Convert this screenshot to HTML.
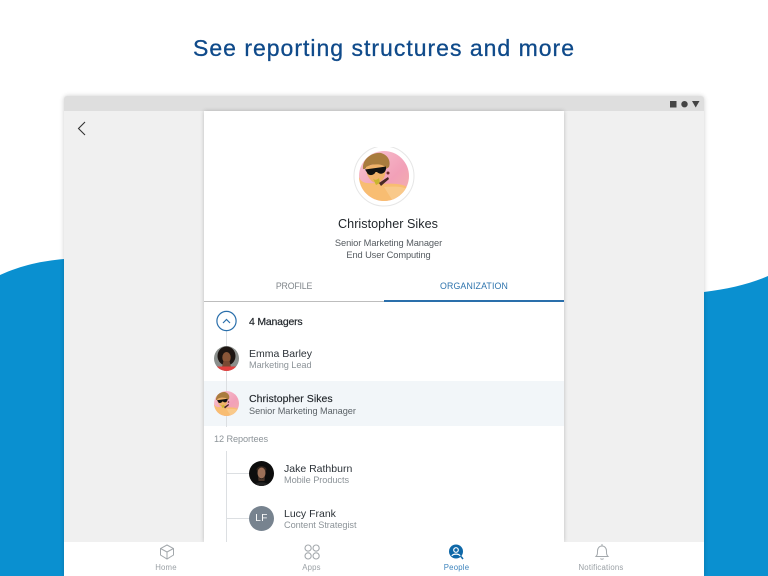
<!DOCTYPE html>
<html><head><meta charset="utf-8"><style>
html,body{margin:0;padding:0}
body{width:768px;height:576px;position:relative;overflow:hidden;background:#fff;font-family:"Liberation Sans",sans-serif}
.t{position:absolute;white-space:nowrap;line-height:14px}
.n{font-size:10.5px;letter-spacing:0;color:#2c3238}
.s{font-size:9.2px;letter-spacing:-.06px;color:#8d9499}
.nav{font-size:7.8px;letter-spacing:.2px;color:#9aa0a5;transform:translateX(-50%)}
.c{transform:translateX(-50%)}
</style></head><body>
<svg style="position:absolute;left:0;top:0" width="768" height="576"><path d="M0 275C22 265 42 261 64 259L704 292C728 289 750 284 768 276V576H0Z" fill="#0a90d0"/></svg>
<div class="t" style="left:193px;top:34px;line-height:28px;font-size:23px;font-weight:400;letter-spacing:1px;color:#0f4a8a;-webkit-text-stroke:.3px #0f4a8a">See reporting structures and more</div>

<div style="position:absolute;left:64px;top:96px;width:640px;height:480px;background:#f0f0f0;box-shadow:0 0 5px rgba(0,0,0,.2);border-radius:3px 3px 0 0"></div>
<div style="position:absolute;left:64px;top:96px;width:640px;height:15px;background:#dedede;border-radius:3px 3px 0 0"></div>
<svg style="position:absolute;left:668px;top:98px" width="34" height="12"><rect x="2" y="3" width="6.5" height="6.5" fill="#444"/><circle cx="16.5" cy="6.2" r="3.2" fill="#444"/><path d="M24 3H31.5L27.7 9.5Z" fill="#444"/></svg>
<svg style="position:absolute;left:74px;top:119px" width="16" height="18"><path d="M11 3L4.500 9.500L11 16" fill="none" stroke="#333" stroke-width="1.100"/></svg>

<div style="position:absolute;left:204px;top:111px;width:360px;height:431px;background:#fff;box-shadow:0 0 4px rgba(0,0,0,.22)"></div>

<!-- big avatar -->
<svg style="position:absolute;left:350px;top:147px" width="68" height="64" viewBox="0 0 68 64">
<defs><linearGradient id="g" x1="0" y1="0" x2="1" y2="1"><stop offset="0" stop-color="#f7c6d2"/><stop offset=".6" stop-color="#f2a0b8"/><stop offset="1" stop-color="#f4b3a8"/></linearGradient>
<clipPath id="c1"><circle cx="34" cy="29" r="25"/></clipPath>
<g id="chris"><rect x="8" y="3" width="52" height="52" fill="url(#g)"/>
<path d="M9 30C12 38 20 36 27 36C38 38 50 34 60 42V56H9Z" fill="#f8bd72"/>
<path d="M34 40C42 40 52 38 60 44V56H44Z" fill="#f9c98a"/>
<path d="M13 22C12 12 22 5 31 6C38 8 41 14 39 20L36 22C28 16 20 16 15 22Z" fill="#a97c3e"/>
<path d="M16 20C22 17 30 16 36 20L35 28C33 35 27 37 23 35C19 32 16 28 16 20Z" fill="#efb169"/>
<path d="M15 22.500L36 19.500L36 22C35 27 30 28 27 25L25.500 25C24 29 18 29 17 25.500Z" fill="#111"/>
<path d="M23 31.500C25 33.500 27 33 29 31L30 36L26 38Z" fill="#c9b52f"/>
<path d="M29 36L38 30L39 32L31 39Z" fill="#4a2a24"/>
<circle cx="38" cy="26" r="1.500" fill="#6e2a2a"/></g></defs>
<circle cx="34" cy="29" r="30" fill="#fff" stroke="#e6e6e6" stroke-width="1"/>
<g clip-path="url(#c1)"><use href="#chris"/></g></svg>

<div class="t c" style="left:388px;top:216px;font-size:12.6px;line-height:16px;letter-spacing:.03px;color:#23282d">Christopher Sikes</div>
<div class="t c" style="left:388.500px;top:236px;font-size:9.3px;letter-spacing:-.1px;color:#555b60">Senior Marketing Manager</div>
<div class="t c" style="left:388.500px;top:248px;font-size:9.3px;letter-spacing:-.12px;color:#555b60">End User Computing</div>

<div class="t c" style="left:294px;top:279px;font-size:8.8px;letter-spacing:-.2px;color:#80868b">PROFILE</div>
<div class="t c" style="left:474px;top:279px;font-size:8.8px;letter-spacing:.15px;color:#2e74ad">ORGANIZATION</div>
<div style="position:absolute;left:204px;top:301px;width:180px;height:1px;background:#bdbdbd"></div>
<div style="position:absolute;left:384px;top:300px;width:180px;height:2px;background:#2a6fab"></div>

<div style="position:absolute;left:204px;top:381px;width:360px;height:45px;background:#f2f6f9"></div>
<div style="position:absolute;left:226px;top:330px;width:1px;height:97px;background:#dcdfe2"></div>
<div style="position:absolute;left:226px;top:451px;width:1px;height:91px;background:#dcdfe2"></div>
<div style="position:absolute;left:226px;top:473px;width:24px;height:1px;background:#dcdfe2"></div>
<div style="position:absolute;left:226px;top:518px;width:24px;height:1px;background:#dcdfe2"></div>

<svg style="position:absolute;left:215px;top:309px" width="24" height="24"><circle cx="11.500" cy="12" r="9.600" fill="#fff" stroke="#2a6fab" stroke-width="1.200"/><path d="M8 14L11.500 10.500L15 14" fill="none" stroke="#2a6fab" stroke-width="1.200"/></svg>
<div class="t" style="left:249px;top:315px;font-size:10.5px;letter-spacing:-.2px;color:#23282d;-webkit-text-stroke:.2px #23282d">4 Managers</div>

<!-- Emma -->
<svg style="position:absolute;left:214px;top:346px" width="25" height="25" viewBox="0 0 25 25"><defs><clipPath id="c2"><circle cx="12.500" cy="12.500" r="12.500"/></clipPath></defs><g clip-path="url(#c2)"><rect width="25" height="25" fill="#8b8f8c"/><ellipse cx="12.500" cy="10" rx="9" ry="9.500" fill="#1d1512"/><ellipse cx="12.500" cy="11.500" rx="4.200" ry="5.500" fill="#8a5638"/><path d="M9.500 15H15.500L17 21H8Z" fill="#7a4a33"/><rect y="20.500" width="25" height="4.500" fill="#e2403f"/></g></svg>
<div class="t n" style="left:249px;top:347px">Emma Barley</div>
<div class="t s" style="left:249px;top:358px">Marketing Lead</div>

<!-- Christopher small -->
<svg style="position:absolute;left:214px;top:391px" width="25" height="25" viewBox="9 4 50 50"><defs><clipPath id="c3"><circle cx="34" cy="29" r="25"/></clipPath></defs><g clip-path="url(#c3)"><use href="#chris"/></g></svg>
<div class="t n" style="left:249px;top:392px;letter-spacing:.05px;color:#1f2429;-webkit-text-stroke:.15px #1f2429">Christopher Sikes</div>
<div class="t s" style="left:249px;top:403.500px;color:#5c6368">Senior Marketing Manager</div>

<div class="t s" style="left:214px;top:432px;letter-spacing:-.1px">12 Reportees</div>

<!-- Jake -->
<svg style="position:absolute;left:249px;top:461px" width="25" height="25" viewBox="0 0 25 25"><defs><clipPath id="c4"><circle cx="12.500" cy="12.500" r="12.500"/></clipPath></defs><g clip-path="url(#c4)"><rect width="25" height="25" fill="#0d0d0d"/><path d="M7.500 9C7.500 4 17.500 4 17.500 9L16 11H9Z" fill="#33241c"/><ellipse cx="12.500" cy="12" rx="4" ry="5.500" fill="#9c7058"/><path d="M9 15C11 19 14 19 16 15L15.500 20H9.500Z" fill="#4a352a"/><path d="M5 25C6 20 19 20 20 25Z" fill="#222"/></g></svg>
<div class="t n" style="left:284px;top:462px">Jake Rathburn</div>
<div class="t s" style="left:284px;top:473px">Mobile Products</div>

<!-- Lucy -->
<div style="position:absolute;left:249px;top:506px;width:25px;height:25px;border-radius:50%;background:#77838f;color:#fff;font-size:10px;line-height:26px;text-align:center;letter-spacing:.4px">LF</div>
<div class="t n" style="left:284px;top:507px">Lucy Frank</div>
<div class="t s" style="left:284px;top:518px">Content Strategist</div>

<!-- bottom nav -->
<div style="position:absolute;left:64px;top:542px;width:640px;height:34px;background:#fff"></div>
<svg style="position:absolute;left:158px;top:543px" width="18" height="18"><g fill="none" stroke="#a3a8ac" stroke-width="1"><path d="M9 2L15.500 5.500V12L9 16L2.500 12V5.500Z"/><path d="M2.500 5.500L9 9L15.500 5.500M9 9V16"/></g></svg>
<svg style="position:absolute;left:303px;top:543px" width="18" height="18"><g fill="none" stroke="#a3a8ac" stroke-width="1.100"><rect x="2" y="2" width="6.200" height="6.200" rx="3.100"/><rect x="10" y="2" width="6.200" height="6.200" rx="3.100"/><rect x="2" y="9.800" width="6.200" height="6.200" rx="3.100"/><rect x="10" y="9.800" width="6.200" height="6.200" rx="3.100"/></g></svg>
<svg style="position:absolute;left:447px;top:543px" width="18" height="18"><circle cx="9" cy="8.500" r="7" fill="#0f68a8"/><path d="M14 13.500L16 16" stroke="#0f68a8" stroke-width="1.500"/><circle cx="9" cy="7" r="2.300" fill="none" stroke="#fff" stroke-width="1.200"/><path d="M5 13C5.500 10.500 12.500 10.500 13 13" fill="none" stroke="#fff" stroke-width="1.200"/></svg>
<svg style="position:absolute;left:593px;top:543px" width="18" height="18"><g fill="none" stroke="#a3a8ac" stroke-width="1"><path d="M3 13.500C4.500 12 4.500 10.500 4.500 8C4.500 5 6.500 3 9 3C11.500 3 13.500 5 13.500 8C13.500 10.500 13.500 12 15 13.500Z"/><path d="M7.500 15.500C8 16.500 10 16.500 10.500 15.500"/><path d="M9 1V3"/></g></svg>
<div class="t nav" style="left:166px;top:561px">Home</div>
<div class="t nav" style="left:311.500px;top:561px">Apps</div>
<div class="t nav" style="left:456.500px;top:561px;color:#3d84bd">People</div>
<div class="t nav" style="left:601px;top:561px">Notifications</div>
</body></html>
